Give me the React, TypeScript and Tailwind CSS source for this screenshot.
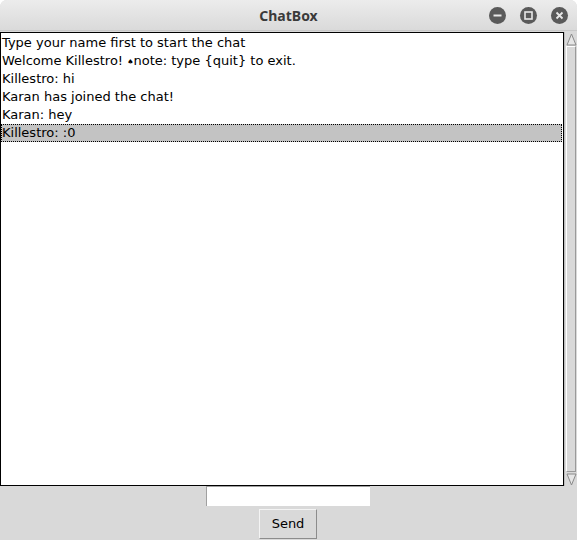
import React from 'react';

const lines = [
  'Type your name first to start the chat',
  'Welcome Killestro! \u2660note: type {quit} to exit.',
  'Killestro: hi',
  'Karan has joined the chat!',
  'Karan: hey',
  'Killestro: :0',
];

function TitleButton({ kind }: { kind: 'min' | 'max' | 'close' }) {
  return (
    <div className="w-[17px] h-[17px] rounded-full bg-[#5a5a5a] flex items-center justify-center">
      <svg width="17" height="17" viewBox="0 0 17 17">
        {kind === 'min' && <rect x="4.5" y="7.5" width="8" height="2" fill="#e8e8e8" />}
        {kind === 'max' && <rect x="5" y="5" width="7" height="7" fill="none" stroke="#e8e8e8" strokeWidth="1.6" />}
        {kind === 'close' && (
          <path d="M5.5 5.5 L11.5 11.5 M11.5 5.5 L5.5 11.5" stroke="#e8e8e8" strokeWidth="1.8" />
        )}
      </svg>
    </div>
  );
}

export default function App() {
  return (
    <div className="w-[577px] h-[540px] bg-white overflow-hidden">
      <div className="w-full h-full flex flex-col rounded-t-[7px] overflow-hidden bg-[#d9d9d9]">
        {/* title bar */}
        <div className="relative h-[31px] shrink-0 flex items-center justify-center bg-gradient-to-b from-[#ececec] to-[#dadada] border-b border-[#c8c8c8]">
          <span className="text-[14px] font-bold text-[#3a3a3a] [font-family:'Noto_Sans',sans-serif]">
            ChatBox
          </span>
          <div className="absolute right-[9px] top-[7px] flex gap-[14px]">
            <TitleButton kind="min" />
            <TitleButton kind="max" />
            <TitleButton kind="close" />
          </div>
        </div>

        {/* list + scrollbar */}
        <div className="flex h-[455px] shrink-0 pt-[1px]">
          <div className="w-[564px] border border-black bg-white pt-[1px] [font-family:'DejaVu_Sans',sans-serif] text-[13px] text-black">
            {lines.map((l, i) => (
              <div
                key={i}
                className={
                  i === lines.length - 1
                    ? 'h-[18px] leading-[16px] mr-[1px] bg-[#c3c3c3] border border-dotted border-black whitespace-pre'
                    : 'h-[18px] leading-[16px] whitespace-pre border border-transparent'
                }
              >
                {l.includes('\u2660') ? (
                  <>
                    {l.split('\u2660')[0]}
                    <span className="text-[7px] align-middle">{'\u2660'}</span>
                    {l.split('\u2660')[1]}
                  </>
                ) : (
                  l
                )}
              </div>
            ))}
          </div>
          <div className="w-[13px] flex flex-col bg-[#d9d9d9] border-l border-[#bdbdbd]">
            <div className="h-[14px] flex items-center justify-center">
              <svg width="11" height="13" viewBox="0 0 11 13">
                <polygon points="5.5,1 10,12 1,12" fill="#e6e6e6" stroke="#8a8a8a" strokeWidth="1" />
              </svg>
            </div>
            <div className="flex-1 mx-[1px] border border-t-white border-l-white border-r-[#9a9a9a] border-b-[#9a9a9a] bg-[#d9d9d9]" />
            <div className="h-[14px] flex items-center justify-center">
              <svg width="11" height="13" viewBox="0 0 11 13">
                <polygon points="1,1 10,1 5.5,12" fill="#e6e6e6" stroke="#8a8a8a" strokeWidth="1" />
              </svg>
            </div>
          </div>
        </div>

        {/* entry + button */}
        <div className="flex flex-col items-center pt-[0px]">
          <div className="w-[164px] h-[20px] -ml-[1px] bg-white border-t border-l border-[#a0a0a0] border-r-[#f0f0f0] border-b-[#f0f0f0]" />
          <button className="mt-[3px] -ml-[1px] w-[58px] h-[30px] bg-[#d9d9d9] border border-t-[#f4f4f4] border-l-[#f4f4f4] border-r-[#8c8c8c] border-b-[#8c8c8c] text-[13px] text-black [font-family:'DejaVu_Sans',sans-serif] flex items-center justify-center">
            Send
          </button>
        </div>
      </div>
    </div>
  );
}
